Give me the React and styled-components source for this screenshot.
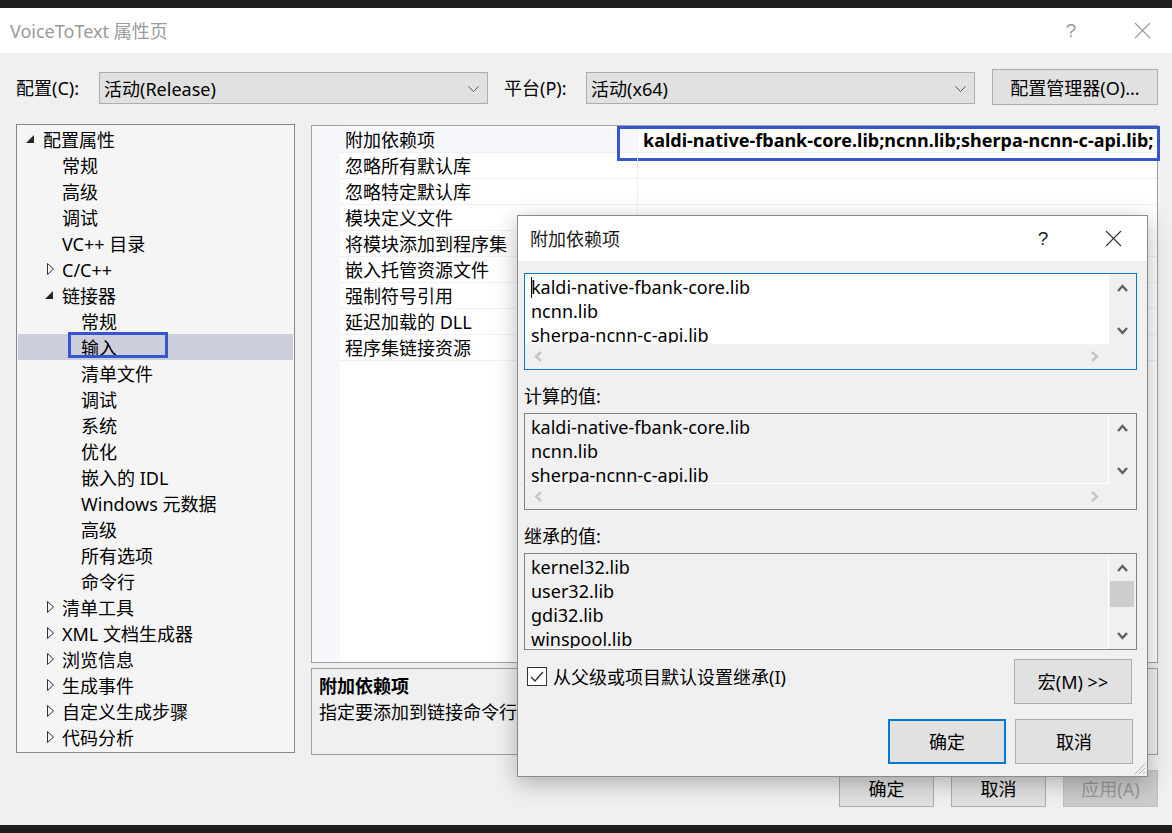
import React from "react";
import styled, { createGlobalStyle } from "styled-components";

const GlobalStyle = createGlobalStyle`
  html, body {
    margin: 0;
    padding: 0;
    background: #1f1f1f;
  }
  body {
    font-family: "Noto Sans", "Noto Sans CJK SC", sans-serif;
    font-size: 18px;
    color: #000;
  }
  * {
    box-sizing: border-box;
  }
`;

const Page = styled.div`
  position: relative;
  width: 1172px;
  height: 833px;
  padding: 8px 0;
  background: #1f1f1f;
  overflow: hidden;
`;

const Window = styled.div`
  height: 817px;
  display: flex;
  flex-direction: column;
  background: #f0f0f0;
`;

const TitleBar = styled.div`
  height: 45px;
  flex: none;
  display: flex;
  align-items: center;
  background: #fff;
  padding-left: ${(p) => p.$pad}px;
  color: ${(p) => (p.$inactive ? "#9a9a9a" : "#1a1a1a")};
`;

const TitleText = styled.div`
  flex: 1;
  line-height: 26px;
  padding-top: 1px;
  white-space: nowrap;
`;

const TitleButton = styled.div`
  width: ${(p) => p.$w}px;
  height: 100%;
  display: flex;
  align-items: center;
  justify-content: center;
  font-size: 19px;
  font-family: "Liberation Sans", sans-serif;
  color: inherit;
`;

const Body = styled.div`
  flex: 1;
  display: flex;
  flex-direction: column;
  padding: 16px 14px 0 16px;
`;

const ConfigRow = styled.div`
  height: 36px;
  display: flex;
  align-items: center;
`;

const FieldLabel = styled.div`
  width: ${(p) => p.$w}px;
  margin-left: ${(p) => p.$ml || 0}px;
  line-height: 26px;
  padding-top: 2px;
  white-space: nowrap;
`;

const Combo = styled.div`
  width: 389px;
  height: 32px;
  margin-top: 2px;
  display: flex;
  align-items: center;
  justify-content: space-between;
  padding: 1px 8px 0 4px;
  background: #e1e1e1;
  border: 1px solid #adadad;
  line-height: 26px;
`;

const PushButton = styled.div`
  width: ${(p) => p.$w}px;
  height: ${(p) => p.$h}px;
  margin-left: ${(p) => p.$ml || 0}px;
  display: flex;
  align-items: center;
  justify-content: center;
  padding-top: 1px;
  background: ${(p) => (p.$disabled ? "#cccccc" : "#e1e1e1")};
  color: ${(p) => (p.$disabled ? "#999" : "#000")};
  border: ${(p) => (p.$default ? "2px solid #0078d7" : p.$disabled ? "1px solid #bfbfbf" : "1px solid #adadad")};
  line-height: 26px;
  white-space: nowrap;
`;

const Main = styled.div`
  margin-top: 19px;
  display: grid;
  grid-template-columns: 279px 1fr;
  column-gap: 16px;
  align-items: start;
`;

const Tree = styled.div`
  height: 629px;
  background: #f5f5f5;
  border: 1px solid #828790;
  padding: 1px 1px 0 1px;
  overflow: hidden;
`;

const TreeRow = styled.div`
  height: 26px;
  display: flex;
  align-items: center;
  padding-left: ${(p) => 6 + p.$level * 19}px;
  padding-top: 2px;
  background: ${(p) => (p.$selected ? "#cccedb" : "transparent")};
  white-space: nowrap;
`;

const Toggle = styled.span`
  width: 19px;
  flex: none;
  display: flex;
  align-items: center;
  padding-left: ${(p) => (p.$open ? 2 : 4)}px;
  margin-top: -2px;
`;

const TreeLabel = styled.span`
  position: relative;
  line-height: 24px;
`;

const Marker = styled.span`
  position: absolute;
  left: ${(p) => p.$left}px;
  top: ${(p) => p.$top}px;
  width: ${(p) => p.$w}px;
  height: ${(p) => p.$h}px;
  border: 3px solid #3656d0;
  pointer-events: none;
`;

const RightCol = styled.div`
  margin-top: 1px;
  display: flex;
  flex-direction: column;
  gap: 5px;
`;

const PropGrid = styled.div`
  height: 538px;
  background: #fff;
  border: 1px solid #a0a0a0;
  padding-top: 1px;
  display: flex;
  flex-direction: column;
  background-image: linear-gradient(to right, #f6f8fc 28px, transparent 28px);
`;

const PropRow = styled.div`
  position: relative;
  height: 26px;
  flex: none;
  display: grid;
  grid-template-columns: 28px 298px 1fr;
`;

const PropName = styled.div`
  padding: 2px 0 0 5px;
  line-height: 23px;
  border-bottom: 1px solid #f0f0f0;
  border-right: 1px solid #f0f0f0;
  background: ${(p) => (p.$active ? "#f6f8fc" : "transparent")};
  white-space: nowrap;
  overflow: hidden;
`;

const PropValue = styled.div`
  padding: 2px 0 0 5px;
  line-height: 23px;
  border-bottom: 1px solid #f0f0f0;
  font-weight: ${(p) => (p.$bold ? 700 : 400)};
  white-space: nowrap;
  overflow: hidden;
`;

const DescPanel = styled.div`
  height: 87px;
  border: 1px solid #a0a0a0;
  padding: 4px 7px 0 7px;
  line-height: 26px;
  white-space: nowrap;
  overflow: hidden;
`;

const DescTitle = styled.div`
  font-weight: 700;
`;

const Footer = styled.div`
  margin-top: 15px;
  display: flex;
  justify-content: flex-end;
  gap: 17px;
`;

const Dialog = styled.div`
  position: absolute;
  left: 517px;
  top: 215px;
  width: 631px;
  height: 562px;
  display: flex;
  flex-direction: column;
  background: #f0f0f0;
  border: 1px solid #8a8a8a;
  box-shadow: 0 6px 22px rgba(0, 0, 0, 0.28);
`;

const DialogBody = styled.div`
  position: relative;
  flex: 1;
  display: flex;
  flex-direction: column;
  padding: 12px 10px 0 6px;
`;

const SectionLabel = styled.div`
  margin: 13px 0 4px;
  line-height: 26px;
`;

const Field = styled.div`
  height: 97px;
  display: grid;
  grid-template-columns: 1fr 27px;
  grid-template-rows: ${(p) => (p.$hscroll ? "1fr 25px" : "1fr")};
  background: #f0f0f0;
  border: 1px solid ${(p) => (p.$focused ? "#0078d7" : "#828282")};
  overflow: hidden;
`;

const FieldText = styled.div`
  padding: 1px 0 0 6px;
  line-height: 24px;
  white-space: pre;
  overflow: hidden;
  background: ${(p) => (p.$readOnly ? "#f0f0f0" : "#fff")};
  border-right: 1px solid ${(p) => (p.$readOnly ? "#fff" : "transparent")};
  border-bottom: 1px solid ${(p) => (p.$readOnly ? "#fff" : "transparent")};
`;

const Caret = styled.span`
  display: inline-block;
  width: 1px;
  height: 21px;
  margin-right: -1px;
  vertical-align: -4px;
  background: #000;
`;

const VScroll = styled.div`
  display: flex;
  flex-direction: column;
`;

const ScrollArrow = styled.div`
  height: 27px;
  flex: none;
  display: flex;
  align-items: center;
  justify-content: center;
`;

const Thumb = styled.div`
  height: 26px;
  margin: 0 2px 0 1px;
  background: #cdcdcd;
`;

const Spacer = styled.div`
  flex: 1;
`;

const HScroll = styled.div`
  display: flex;
  align-items: center;
  justify-content: space-between;
  padding: 0 10px 0 9px;
`;

const CheckRow = styled.div`
  margin-top: 9px;
  display: flex;
  align-items: center;
  justify-content: space-between;
  padding: 0 5px 0 3px;
`;

const CheckLabel = styled.label`
  display: flex;
  align-items: center;
  gap: 6px;
  line-height: 24px;
  margin-top: -10px;
`;

const CheckBox = styled.span`
  width: 20px;
  height: 19px;
  display: flex;
  align-items: center;
  justify-content: center;
  background: #fff;
  border: 1px solid #333;
`;

const ButtonRow = styled.div`
  margin-top: 15px;
  display: flex;
  justify-content: flex-end;
  gap: 9px;
  padding-right: 4px;
`;

const Grip = styled.div`
  position: absolute;
  right: 1px;
  bottom: 1px;
  line-height: 0;
`;

const Triangle = ({ open }) =>
  open ? (
    <svg width="8" height="8" viewBox="0 0 8 8">
      <polygon points="8,0 8,8 0,8" fill="#262626" />
    </svg>
  ) : (
    <svg width="8" height="12" viewBox="0 0 8 12">
      <polygon points="0.5,0.5 6.5,6 0.5,11.5" fill="none" stroke="#333" strokeWidth="1" />
    </svg>
  );

const Chevron = ({ dir, color, sw = 2.4 }) => {
  if (dir === "left" || dir === "right") {
    const p = dir === "left" ? "7,1 2,5.5 7,10" : "1,1 6,5.5 1,10";
    return (
      <svg width="8" height="11" viewBox="0 0 8 11">
        <polyline points={p} fill="none" stroke={color} strokeWidth={sw} />
      </svg>
    );
  }
  const p = dir === "up" ? "1,7 5.5,2 10,7" : "1,1 5.5,6 10,1";
  return (
    <svg width="11" height="8" viewBox="0 0 11 8">
      <polyline points={p} fill="none" stroke={color} strokeWidth={sw} />
    </svg>
  );
};

const ComboArrow = () => (
  <svg width="11" height="6" viewBox="0 0 11 6">
    <polyline points="0.5,0.5 5.5,5.5 10.5,0.5" fill="none" stroke="#555" strokeWidth="1" />
  </svg>
);

const CloseIcon = ({ color }) => (
  <svg width="17" height="17" viewBox="0 0 17 17">
    <line x1="1" y1="1" x2="16" y2="16" stroke={color} strokeWidth="1.1" />
    <line x1="16" y1="1" x2="1" y2="16" stroke={color} strokeWidth="1.1" />
  </svg>
);

const treeItems = [
  { label: "配置属性", level: 0, toggle: "open" },
  { label: "常规", level: 1 },
  { label: "高级", level: 1 },
  { label: "调试", level: 1 },
  { label: "VC++ 目录", level: 1 },
  { label: "C/C++", level: 1, toggle: "closed" },
  { label: "链接器", level: 1, toggle: "open" },
  { label: "常规", level: 2 },
  { label: "输入", level: 2, selected: true },
  { label: "清单文件", level: 2 },
  { label: "调试", level: 2 },
  { label: "系统", level: 2 },
  { label: "优化", level: 2 },
  { label: "嵌入的 IDL", level: 2 },
  { label: "Windows 元数据", level: 2 },
  { label: "高级", level: 2 },
  { label: "所有选项", level: 2 },
  { label: "命令行", level: 2 },
  { label: "清单工具", level: 1, toggle: "closed" },
  { label: "XML 文档生成器", level: 1, toggle: "closed" },
  { label: "浏览信息", level: 1, toggle: "closed" },
  { label: "生成事件", level: 1, toggle: "closed" },
  { label: "自定义生成步骤", level: 1, toggle: "closed" },
  { label: "代码分析", level: 1, toggle: "closed" },
];

const props = [
  "附加依赖项",
  "忽略所有默认库",
  "忽略特定默认库",
  "模块定义文件",
  "将模块添加到程序集",
  "嵌入托管资源文件",
  "强制符号引用",
  "延迟加载的 DLL",
  "程序集链接资源",
];

const libs = ["kaldi-native-fbank-core.lib", "ncnn.lib", "sherpa-ncnn-c-api.lib"];
const inherited = ["kernel32.lib", "user32.lib", "gdi32.lib", "winspool.lib"];

const TextField = ({ lines, focused, readOnly, hscroll, thumb }) => (
  <Field $focused={focused} $hscroll={hscroll}>
    <FieldText $readOnly={readOnly}>
      {lines.map((l, i) => (
        <div key={i}>
          {focused && i === 0 && <Caret />}
          {l}
        </div>
      ))}
    </FieldText>
    <VScroll>
      <ScrollArrow>
        <Chevron dir="up" color="#606060" />
      </ScrollArrow>
      {thumb && <Thumb />}
      <Spacer />
      <ScrollArrow>
        <Chevron dir="down" color="#606060" />
      </ScrollArrow>
    </VScroll>
    {hscroll && (
      <>
        <HScroll>
          <Chevron dir="left" color="#c6c6c6" />
          <Chevron dir="right" color="#c6c6c6" />
        </HScroll>
        <div />
      </>
    )}
  </Field>
);

export default function App() {
  return (
    <Page>
      <GlobalStyle />
      <Window>
        <TitleBar $inactive $pad={10}>
          <TitleText>VoiceToText 属性页</TitleText>
          <TitleButton $w={70}>?</TitleButton>
          <TitleButton $w={6} />
          <TitleButton $w={60}>
            <CloseIcon color="#9a9a9a" />
          </TitleButton>
        </TitleBar>
        <Body>
          <ConfigRow>
            <FieldLabel $w={83}>配置(C):</FieldLabel>
            <Combo>
              <span>活动(Release)</span>
              <ComboArrow />
            </Combo>
            <FieldLabel $w={82} $ml={16}>
              平台(P):
            </FieldLabel>
            <Combo>
              <span>活动(x64)</span>
              <ComboArrow />
            </Combo>
            <PushButton $w={166} $h={36} $ml={17}>
              配置管理器(O)...
            </PushButton>
          </ConfigRow>

          <Main>
            <Tree>
              {treeItems.map((item, i) => (
                <TreeRow key={i} $level={item.level} $selected={item.selected}>
                  <Toggle $open={item.toggle === "open"}>
                    {item.toggle && <Triangle open={item.toggle === "open"} />}
                  </Toggle>
                  <TreeLabel>
                    {item.label}
                    {item.selected && <Marker $left={-13} $top={-4} $w={100} $h={26} />}
                  </TreeLabel>
                </TreeRow>
              ))}
            </Tree>

            <RightCol>
              <PropGrid>
                {props.map((name, i) => (
                  <PropRow key={i}>
                    <div />
                    <PropName $active={i === 0}>{name}</PropName>
                    <PropValue $bold={i === 0}>
                      {i === 0 ? "kaldi-native-fbank-core.lib;ncnn.lib;sherpa-ncnn-c-api.lib;" : ""}
                    </PropValue>
                    {i === 0 && <Marker $left={305} $top={-1} $w={543} $h={35} />}
                  </PropRow>
                ))}
              </PropGrid>
              <DescPanel>
                <DescTitle>附加依赖项</DescTitle>
                <div>指定要添加到链接命令行</div>
              </DescPanel>
            </RightCol>
          </Main>

          <Footer>
            <PushButton $w={95} $h={37}>
              确定
            </PushButton>
            <PushButton $w={95} $h={37}>
              取消
            </PushButton>
            <PushButton $w={95} $h={37} $disabled>
              应用(A)
            </PushButton>
          </Footer>
        </Body>
      </Window>

      <Dialog>
        <TitleBar $pad={12}>
          <TitleText>附加依赖项</TitleText>
          <TitleButton $w={68}>?</TitleButton>
          <TitleButton $w={2} />
          <TitleButton $w={68}>
            <CloseIcon color="#333" />
          </TitleButton>
        </TitleBar>
        <DialogBody>
          <TextField lines={libs} focused hscroll />
          <SectionLabel>计算的值:</SectionLabel>
          <TextField lines={libs} readOnly hscroll />
          <SectionLabel>继承的值:</SectionLabel>
          <TextField lines={inherited} readOnly thumb />
          <CheckRow>
            <CheckLabel>
              <CheckBox>
                <svg width="14" height="12" viewBox="0 0 14 12">
                  <polyline points="1,6 5,10 13,1" fill="none" stroke="#333" strokeWidth="1.4" />
                </svg>
              </CheckBox>
              从父级或项目默认设置继承(I)
            </CheckLabel>
            <PushButton $w={118} $h={45}>
              宏(M) &gt;&gt;
            </PushButton>
          </CheckRow>
          <ButtonRow>
            <PushButton $w={118} $h={45} $default>
              确定
            </PushButton>
            <PushButton $w={118} $h={45}>
              取消
            </PushButton>
          </ButtonRow>
          <Grip>
            <svg width="13" height="13" viewBox="0 0 13 13">
              <line x1="12" y1="2" x2="2" y2="12" stroke="#b0b0b0" strokeWidth="1" />
              <line x1="12" y1="6" x2="6" y2="12" stroke="#b0b0b0" strokeWidth="1" />
              <line x1="12" y1="10" x2="10" y2="12" stroke="#b0b0b0" strokeWidth="1" />
            </svg>
          </Grip>
        </DialogBody>
      </Dialog>
    </Page>
  );
}
